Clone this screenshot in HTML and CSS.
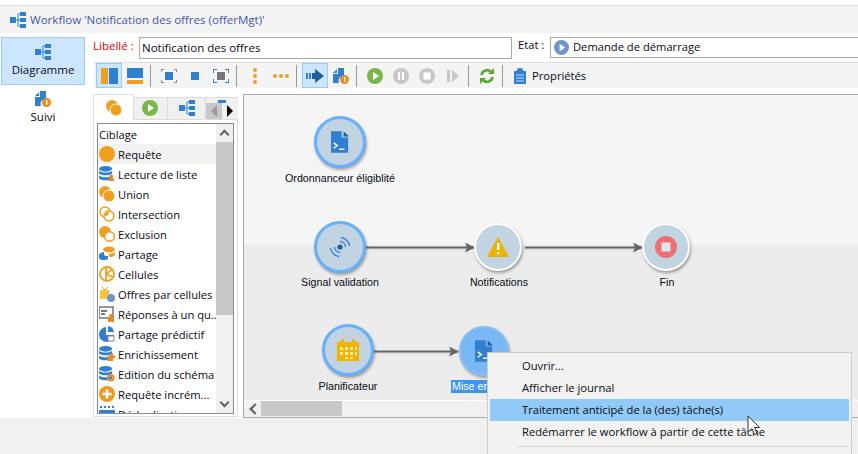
FILE: index.html
```html
<!DOCTYPE html>
<html lang="fr">
<head>
  <meta charset="UTF-8">
  <title>Workflow</title>
  <link rel="stylesheet" href="styles.css">
</head>
<body>

  <svg class="defs" width="0" height="0">
    <symbol id="i-wf" viewBox="0 0 16 16">
      <rect x="0" y="5" width="6" height="6" fill="#2f80d0"/>
      <rect x="10" y="0" width="6" height="4" fill="#2f80d0"/>
      <rect x="10" y="6" width="6" height="4" fill="#2f80d0"/>
      <rect x="10" y="12" width="6" height="4" fill="#2f80d0"/>
      <path d="M6 8h2M8 2v12M8 2h2M8 8h2M8 14h2" stroke="#2f80d0" fill="none"/>
    </symbol>
    <symbol id="i-doc" viewBox="0 0 20 24">
      <path d="M0 0h12v7h7v17h-19z" fill="#2f80d0"/>
      <path d="M14 0l6 6h-6z" fill="#1e5f9e"/>
      <path d="M3 13l4 3-4 3M9 20h6" stroke="#fff" stroke-width="1.5" fill="none"/>
    </symbol>
    <symbol id="i-suivi" viewBox="0 0 16 16">
      <path d="M0 5l4-4v4zM5 0h6v8a5 5 0 0 0-5 7h-6v-9h5z" fill="#2f80d0"/>
      <circle cx="11.5" cy="11.5" r="4.5" fill="#ee8a1d"/>
      <rect x="11" y="9" width="1.4" height="5" fill="#fff"/>
    </symbol>
    <symbol id="i-db" viewBox="0 0 17 17">
      <ellipse cx="7" cy="3" rx="7" ry="3" fill="#2f80d0"/>
      <path d="M0 5c2 2.500 12 2.500 14 0v3c-2 2.500-12 2.500-14 0zM0 10c2 2.500 12 2.500 14 0v3c-2 3-12 3-14 0z" fill="#2f80d0"/>
    </symbol>
  </svg>

  <div class="top-gap"></div>
  <div class="title-bar">
    <svg class="title-icon"><use href="#i-wf"/></svg>
    <span>Workflow 'Notification des offres (offerMgt)'</span>
  </div>

  <div class="main">
    <div class="sidebar">
      <div class="side-btn active">
        <svg class="side-icon"><use href="#i-wf"/></svg>
        <span>Diagramme</span>
      </div>
      <div class="side-btn">
        <svg class="side-icon"><use href="#i-suivi"/></svg>
        <span>Suivi</span>
      </div>
    </div>

    <div class="content">
      <div class="form-row">
        <label class="lbl-required">Libellé :</label>
        <div class="field field-name">Notification des offres</div>
        <label class="lbl-state">Etat :</label>
        <div class="field field-state">
          <svg width="15" height="15" viewBox="0 0 16 16"><circle cx="8" cy="8" r="8" fill="#6f94c6"/><path d="M6 4l6 4-6 4z" fill="#fff"/></svg>
          Demande de démarrage
        </div>
      </div>

      <div class="toolbar">
        <div class="tool on"><svg width="17" height="16" viewBox="0 0 17 16"><rect width="7" height="16" fill="#f0a020"/><rect x="8" width="9" height="16" fill="#2f80d0"/></svg></div>
        <div class="tool"><svg width="16" height="16" viewBox="0 0 16 16"><rect width="16" height="10" fill="#2f80d0"/><rect y="12" width="16" height="4" fill="#f0a020"/></svg></div>
        <div class="sep"></div>
        <div class="tool"><svg width="16" height="14" viewBox="0 0 16 14"><rect x="4" y="3" width="8" height="8" fill="#2f80d0"/><path d="M0 0h3v1h-2v2h-1zM16 0h-3v1h2v2h1zM0 14h3v-1h-2v-2h-1zM16 14h-3v-1h2v-2h1z" fill="#888"/></svg></div>
        <div class="tool"><svg width="8" height="8"><rect width="8" height="8" fill="#2f80d0"/></svg></div>
        <div class="tool"><svg width="16" height="14" viewBox="0 0 16 14"><rect x="4" y="3" width="8" height="8" fill="#777"/><path d="M0 0h4v1h-3v3h-1zM16 0h-4v1h3v3h1zM0 14h4v-1h-3v-3h-1zM16 14h-4v-1h3v-3h1z" fill="#2f80d0"/></svg></div>
        <div class="sep"></div>
        <div class="tool"><svg width="6" height="16" viewBox="0 0 6 16"><circle cx="3" cy="2" r="2" fill="#f0a020"/><circle cx="3" cy="8" r="2" fill="#f0a020"/><circle cx="3" cy="14" r="2" fill="#f0a020"/></svg></div>
        <div class="tool"><svg width="16" height="6" viewBox="0 0 16 6"><circle cx="2" cy="3" r="2" fill="#f0a020"/><circle cx="8" cy="3" r="2" fill="#f0a020"/><circle cx="14" cy="3" r="2" fill="#f0a020"/></svg></div>
        <div class="sep"></div>
        <div class="tool on"><svg width="18" height="14" viewBox="0 0 18 14"><rect y="4" width="2" height="6" fill="#2f80d0"/><rect x="3" y="4" width="2" height="6" fill="#2f80d0"/><path d="M6 4h3v-4l9 7-9 7v-4h-3z" fill="#1e5f9e"/></svg></div>
        <div class="tool"><svg width="16" height="16"><use href="#i-suivi"/></svg></div>
        <div class="sep"></div>
        <div class="tool"><svg width="16" height="16" viewBox="0 0 16 16"><circle cx="8" cy="8" r="8" fill="#7ab648"/><path d="M6 4l6 4-6 4z" fill="#fff"/></svg></div>
        <div class="tool"><svg width="16" height="16" viewBox="0 0 16 16"><circle cx="8" cy="8" r="8" fill="#c8c8c8"/><rect x="5" y="4" width="2" height="8" fill="#fff"/><rect x="9" y="4" width="2" height="8" fill="#fff"/></svg></div>
        <div class="tool"><svg width="16" height="16" viewBox="0 0 16 16"><circle cx="8" cy="8" r="8" fill="#c8c8c8"/><rect x="4.500" y="4.500" width="7" height="7" fill="#fff"/></svg></div>
        <div class="tool"><svg width="12" height="12" viewBox="0 0 12 12"><rect width="3" height="12" fill="#c8c8c8"/><path d="M5 0l7 6-7 6z" fill="#c8c8c8"/></svg></div>
        <div class="sep"></div>
        <div class="tool"><svg width="16" height="16" viewBox="0 0 16 16"><path d="M2.500 7a5.500 5.500 0 0 1 9.500-3M13.500 9a5.500 5.500 0 0 1-9.500 3" stroke="#5aa832" stroke-width="2.600" fill="none"/><path d="M15 0v6h-6zM1 16v-6h6z" fill="#5aa832"/></svg></div>
        <div class="sep"></div>
        <div class="props">
          <svg width="12" height="16" viewBox="0 0 12 16"><path d="M0 3h3v-1a3 2 0 0 1 6 0v1h3v13h-12z" fill="#2f80d0"/><path d="M2 7h8M2 10h8M2 13h8" stroke="#cfe3f6"/></svg>
          <span>Propriétés</span>
        </div>
      </div>

      <div class="work">
        <div class="palette">
          <div class="tabs">
            <div class="tab current"><svg width="16" height="16" viewBox="0 0 16 16"><circle cx="6" cy="6" r="6" fill="#f0a020"/><circle cx="10" cy="10" r="6" fill="#f0a020" stroke="#fff"/></svg></div>
            <div class="tab t2"><svg width="16" height="16" viewBox="0 0 16 16"><circle cx="8" cy="8" r="8" fill="#7ab648"/><path d="M6 4l6 4-6 4z" fill="#fff"/></svg></div>
            <div class="tab t3"><svg width="16" height="16"><use href="#i-wf"/></svg></div>
            <div class="tab-nav">
              <div class="tab-peek"></div>
              <div class="nav-btns">
                <div class="nav-btn prev"></div>
                <div class="nav-btn next"></div>
              </div>
            </div>
          </div>
          <div class="tab-body">
            <div class="list">
              <ul class="items">
                <li class="head">Ciblage</li>
                <li class="hover"><svg viewBox="0 0 16 16"><circle cx="8" cy="8" r="8" fill="#f0a020"/></svg>Requête</li>
                <li><svg viewBox="0 0 17 17"><use href="#i-db"/><circle cx="13" cy="11" r="2" fill="#ee8a1d"/><rect x="10" y="13" width="6" height="3" fill="#ee8a1d"/></svg>Lecture de liste</li>
                <li><svg viewBox="0 0 16 16"><circle cx="6" cy="6" r="6" fill="#f0a020"/><circle cx="10" cy="10" r="6" fill="#f0a020" stroke="#fff"/></svg>Union</li>
                <li><svg viewBox="0 0 16 16"><circle cx="6" cy="6" r="5" fill="none" stroke="#f0a020" stroke-width="1.500"/><circle cx="10" cy="10" r="5" fill="#fff" stroke="#f0a020" stroke-width="1.500"/><path d="M6 10a4 4 0 0 1 4-4 4 4 0 0 1-4 4z" fill="#f0a020"/></svg>Intersection</li>
                <li><svg viewBox="0 0 16 16"><circle cx="6" cy="6" r="6" fill="#f0a020"/><circle cx="10.500" cy="10.500" r="4.800" fill="#fff" stroke="#f0a020" stroke-width="1.500"/></svg>Exclusion</li>
                <li><svg viewBox="0 0 16 16"><ellipse cx="10" cy="3.500" rx="6" ry="3" fill="#f0a020"/><path d="M6 7c3 1 8 1 10-1v3c-1 2-4 2-6 2v-2c0-1-2-2-4-2z" fill="#f0a020"/><path d="M0 9c0-1 2-3 5-3v3c1 1 3 1 4 1v3c-3 2-9 1-9-1z" fill="#2f80d0"/></svg>Partage</li>
                <li><svg viewBox="0 0 16 16"><circle cx="8" cy="8" r="7" fill="none" stroke="#f0a020" stroke-width="1.800"/><path d="M7 1v14M7 8l7-5M7 8l7 3" stroke="#f0a020" stroke-width="1.800" fill="none"/></svg>Cellules</li>
                <li><svg viewBox="0 0 16 16"><rect x="1" y="4" width="9" height="9" fill="#f5c43a"/><path d="M3 1l3 3 3-3" stroke="#f0a020" fill="none"/><circle cx="12" cy="12" r="4" fill="#6f94c6"/></svg>Offres par cellules</li>
                <li><svg viewBox="0 0 16 16"><rect x="0" y="1" width="14" height="11" fill="none" stroke="#777" stroke-width="1.500"/><path d="M2 5h6M2 8h4" stroke="#777" stroke-width="2"/><circle cx="12" cy="10" r="2" fill="#ee8a1d"/><rect x="9" y="12" width="6" height="4" fill="#ee8a1d"/></svg>Réponses à un qu...</li>
                <li><svg viewBox="0 0 16 16"><path d="M7 1v8h8a7.500 7.500 0 1 1-8-8z" fill="#2f80d0"/><path d="M9 0a7 7 0 0 1 6 6h-6z" fill="#2f80d0"/><rect x="9" y="10" width="6" height="5" fill="#fff" stroke="#888"/></svg>Partage prédictif</li>
                <li><svg viewBox="0 0 17 17"><use href="#i-db"/><path d="M9 10h3v-2h3v2h2v3h-2v3h-6z" fill="#ee8a1d"/></svg>Enrichissement</li>
                <li><svg viewBox="0 0 17 17"><use href="#i-db"/><circle cx="12.500" cy="12.500" r="3" fill="none" stroke="#ee8a1d" stroke-width="2.200"/></svg>Edition du schéma</li>
                <li><svg viewBox="0 0 16 16"><circle cx="8" cy="8" r="8" fill="#ee9a20"/><path d="M8 3.500v9M3.500 8h9" stroke="#fff" stroke-width="2.500"/></svg>Requête incrém...</li>
                <li><svg viewBox="0 0 16 16"><rect y="4" width="16" height="12" fill="#2f80d0"/><path d="M1 1h2M5 1h2M9 1h2M13 1h2" stroke="#2f80d0" stroke-width="2"/></svg>Déduplication</li>
              </ul>
              <div class="list-scroll">
                <div class="arrow up"></div>
                <div class="thumb"></div>
                <div class="arrow down"></div>
              </div>
            </div>
          </div>
        </div>

        <div class="canvas">
          <div class="band-top"></div>
          <div class="band-bottom"></div>
          <div class="hscroll"><div class="harrow"></div><div class="hthumb"></div></div>

          <svg class="links" width="615" height="305">
            <defs>
              <marker id="head" markerWidth="10" markerHeight="10" refX="9" refY="5" orient="auto" markerUnits="userSpaceOnUse">
                <path d="M0 0l10 5-10 5 2-5z" fill="#666"/>
              </marker>
            </defs>
            <path class="link-shadow" d="M122 154h108M281 154h117M130 258h84"/>
            <path class="link" d="M122 152.500h108" marker-end="url(#head)"/>
            <path class="link" d="M281 152.500h117" marker-end="url(#head)"/>
            <path class="link" d="M130 256.500h84" marker-end="url(#head)"/>
          </svg>

          <div class="node sel" style="left:70px;top:21px">
            <svg width="18" height="22"><use href="#i-doc"/></svg>
          </div>
          <div class="node-label" style="left:96px;top:77px">Ordonnanceur éligiblité</div>

          <div class="node sel" style="left:70px;top:126px">
            <svg width="24" height="24" viewBox="0 0 24 24"><circle cx="12" cy="12" r="2.600" fill="#1e5f9e"/><g fill="none" stroke="#2f80d0" stroke-width="1.300"><path d="M12 6.500a5.500 5.500 0 0 1 5.500 5.500M12 17.500a5.500 5.500 0 0 1-5.500-5.500M13 2.500a9.500 9.500 0 0 1 8.500 8.500M11 21.500a9.500 9.500 0 0 1-8.500-8.500"/></g></svg>
          </div>
          <div class="node-label" style="left:96px;top:181px">Signal validation</div>

          <div class="node plain" style="left:230px;top:128px">
            <svg width="22" height="20" viewBox="0 0 22 20"><path d="M11 0l11 20h-22z" fill="#edb100"/><rect x="10" y="6" width="2.400" height="7" fill="#fff"/><rect x="10" y="15" width="2.400" height="2.400" fill="#fff"/></svg>
          </div>
          <div class="node-label" style="left:255px;top:181px">Notifications</div>

          <div class="node plain" style="left:398px;top:128px">
            <svg width="22" height="22" viewBox="0 0 22 22"><circle cx="11" cy="11" r="11" fill="#f07070"/><rect x="6.500" y="6.500" width="9" height="9" fill="#dce6f0"/></svg>
          </div>
          <div class="node-label" style="left:423px;top:181px">Fin</div>

          <div class="node sel" style="left:78px;top:229px">
            <svg width="22" height="22" viewBox="0 0 22 22"><path d="M0 3h4v-3h3v3h8v-3h3v3h4v19h-22z" fill="#f0b400"/><path d="M3 8h3v3h-3zM8 8h3v3h-3zM13 8h3v3h-3zM18 8h2v3h-2zM3 13h3v3h-3zM8 13h3v3h-3zM13 13h3v3h-3zM18 13h2v3h-2zM8 18h3v2h-3zM13 18h3v2h-3z" fill="#fde9a8"/></svg>
          </div>
          <div class="node-label" style="left:104px;top:285px">Planificateur</div>

          <div class="node picked" style="left:215px;top:231px">
            <svg width="18" height="22"><use href="#i-doc"/></svg>
          </div>
          <div class="node-label picked-label" style="left:207px;top:285px">Mise en ligne</div>
        </div>
      </div>
    </div>
  </div>

  <div class="footer"></div>

  <div class="menu">
    <div class="menu-item">Ouvrir...</div>
    <div class="menu-item">Afficher le journal</div>
    <div class="menu-item hot">Traitement anticipé de la (des) tâche(s)</div>
    <div class="menu-item">Redémarrer le workflow à partir de cette tâche</div>
    <div class="menu-sep"></div>
  </div>

  <svg class="cursor" width="13" height="21" viewBox="0 0 13 21"><path d="M1 1v16l4-3.500 2.500 6 2.500-1-2.500-6h5z" fill="#fff" stroke="#333"/></svg>

</body>
</html>
```

FILE: styles.css
```css
* {
  box-sizing: border-box;
}
html, body {
  margin: 0;
  height: 454px;
  overflow: hidden;
}
body {
  position: relative;
  background: #fff;
  color: #0a0a14;
  font-family: "Open Sans", sans-serif;
  font-size: 11.2px;
}
.defs {
  position: absolute;
}
.top-gap {
  height: 6px;
  border-bottom: 1px solid #ddd;
}
.title-bar {
  height: 27px;
  background: #f4f4f4;
  display: flex;
  align-items: center;
  padding-left: 10px;
  gap: 4px;
  color: #3f55b5;
  font-size: 11.55px;
}
.title-icon {
  width: 16px;
  height: 16px;
}
.main {
  display: flex;
  height: 385px;
}
.sidebar {
  width: 90px;
  flex: none;
  padding: 4px 5px 0 1px;
}
.side-btn {
  height: 48px;
  display: flex;
  flex-direction: column;
  align-items: center;
  gap: 2px;
  padding-top: 6px;
  font-size: 11.5px;
}
.side-btn.active {
  background: #cce6ff;
  border: 1px solid #99ccf5;
}
.side-icon {
  width: 16px;
  height: 16px;
  flex: none;
}
.content {
  flex: 1;
  min-width: 0;
  display: flex;
  flex-direction: column;
}
.form-row {
  display: flex;
  align-items: flex-start;
  height: 29px;
  padding-top: 4px;
  padding-left: 3px;
  flex: none;
}
.lbl-required {
  color: #e00000;
  width: 46px;
  flex: none;
  line-height: 17px;
  font-size: 11.5px;
}
.lbl-state {
  width: 32px;
  flex: none;
  margin-left: 6px;
  line-height: 15px;
}
.field {
  height: 22px;
  flex: none;
  border: 1px solid #aaa;
  background: #fff;
  display: flex;
  align-items: center;
  padding: 0 0 2px 2px;
}
.field-name {
  width: 373px;
  font-size: 11.5px;
}
.field-state {
  width: 320px;
  height: 21px;
  gap: 4px;
  padding-left: 3px;
}
.field-state svg {
  margin-top: 2px;
}
.toolbar {
  margin-left: 4px;
  height: 26px;
  flex: none;
  border-top: 1px solid #ddd;
  background: #f4f4f4;
  display: flex;
  align-items: center;
  padding-left: 2px;
}
.tool {
  width: 26px;
  height: 25px;
  display: flex;
  align-items: center;
  justify-content: center;
}
.tool.on {
  background: #cce6ff;
  border: 1px solid #99ccf5;
}
.sep {
  width: 1px;
  height: 22px;
  background: #999;
  margin: 0 5px 0 2px;
}
.props {
  display: flex;
  align-items: center;
  gap: 6px;
  margin-left: 6px;
}
.work {
  flex: 1;
  display: flex;
  padding-top: 6px;
  min-height: 0;
}
.palette {
  width: 145px;
  flex: none;
  margin-left: 3px;
  display: flex;
  flex-direction: column;
  padding-bottom: 1px;
}
.tabs {
  height: 26px;
  flex: none;
  display: flex;
  border-bottom: 1px solid #ddd;
}
.tab {
  display: flex;
  align-items: center;
  justify-content: center;
  background: #f0f0f0;
  border: 1px solid #ddd;
  border-left: 0;
  border-bottom: 0;
  width: 34px;
  margin-top: 3px;
  padding-bottom: 2px;
}
.tab.current {
  width: 41px;
  height: 26px;
  margin-top: 0;
  padding-bottom: 0;
  background: #fff;
  border-left: 1px solid #ddd;
}
.tab.t2 {
  padding-right: 2px;
}
.tab.t3 {
  width: 38px;
  padding-left: 1px;
}
.tab-nav {
  flex: 1;
  margin-top: 3px;
  background: #f0f0f0;
  border-top: 1px solid #ddd;
  display: flex;
  flex-direction: column;
}
.tab-peek {
  width: 8px;
  height: 3px;
  margin: 2px 0 0 12px;
  background: #2f80d0;
  flex: none;
}
.nav-btns {
  display: flex;
  flex: 1;
}
.nav-btn {
  width: 16px;
  height: 16px;
  display: flex;
  align-items: center;
  justify-content: center;
}
.nav-btn.prev {
  background: #c8c8c8;
}
.nav-btn.prev::before {
  content: "";
  border: 6px solid transparent;
  border-left: 0;
  border-right: 6px solid #9a9a9a;
}
.nav-btn.next::before {
  content: "";
  border: 6px solid transparent;
  border-right: 0;
  border-left: 6px solid #000;
}
.tab-body {
  flex: 1;
  border: 1px solid #ddd;
  border-top: 0;
  padding: 3px 3px 2px 3px;
  min-height: 0;
}
.list {
  height: 100%;
  border: 1px solid #8a8a94;
  display: flex;
  overflow: hidden;
}
.items {
  list-style: none;
  margin: 0;
  padding: 0;
  flex: 1;
  min-width: 0;
}
.items li {
  height: 20px;
  display: flex;
  align-items: center;
  gap: 3px;
  padding-left: 1px;
  white-space: nowrap;
}
.items li svg {
  width: 16px;
  height: 16px;
  flex: none;
}
.items .hover {
  background: #f2f2f2;
}
.list-scroll {
  width: 17px;
  flex: none;
  background: #f0f0f0;
  display: flex;
  flex-direction: column;
  align-items: center;
}
.arrow {
  width: 7px;
  height: 7px;
  border-left: 2px solid #606060;
  border-top: 2px solid #606060;
  flex: none;
}
.arrow.up {
  transform: rotate(45deg);
  margin: 7px 0 4px;
}
.arrow.down {
  transform: rotate(225deg);
  margin-top: auto;
  margin-bottom: 7px;
}
.thumb {
  width: 100%;
  height: 173px;
  flex: none;
  background: #c8c8c8;
}
.canvas {
  position: relative;
  width: 615px;
  flex: none;
  margin-left: 5px;
  border-top: 1px solid #aaa;
  border-left: 1px solid #aaa;
  border-bottom: 1px solid #aaa;
  display: flex;
  flex-direction: column;
  overflow: hidden;
}
.band-top {
  height: 150px;
  background: #f5f5f5;
}
.band-bottom {
  flex: 1;
  background: #ececec;
}
.hscroll {
  height: 17px;
  flex: none;
  background: #f0f0f0;
  border-top: 1px solid #fff;
  padding-bottom: 1px;
  display: flex;
  align-items: stretch;
}
.harrow {
  width: 17px;
  position: relative;
}
.harrow::before {
  content: "";
  position: absolute;
  left: 7px;
  top: 4px;
  width: 6px;
  height: 6px;
  border-left: 2px solid #606060;
  border-bottom: 2px solid #606060;
  transform: rotate(45deg);
}
.hthumb {
  width: 81px;
  background: #c8c8c8;
}
.links {
  position: absolute;
  left: 0;
  top: 0;
}
.link {
  stroke: #666;
  stroke-width: 2;
  fill: none;
}
.link-shadow {
  stroke: #ccc;
  stroke-width: 1;
  fill: none;
}
.node {
  position: absolute;
  width: 52px;
  height: 52px;
  border-radius: 50%;
  background: #c2d4e2;
  display: flex;
  align-items: center;
  justify-content: center;
  box-shadow: 1px 2px 3px rgba(0, 0, 0, 0.35);
}
.node.sel {
  border: 3px solid #66b1fb;
}
.node.plain {
  width: 48px;
  height: 48px;
  border: 2px solid #fff;
}
.node.picked {
  width: 50px;
  height: 50px;
  background: #7ab8f5;
  border: 2px solid #85bdf5;
}
.node-label {
  position: absolute;
  transform: translateX(-50%);
  font-family: "Liberation Sans", Arial, sans-serif;
  font-size: 10.7px;
  line-height: 13px;
  white-space: nowrap;
}
.picked-label {
  background: #3d95f0;
  color: #fff;
  transform: none;
  padding: 0 1px;
}
.footer {
  height: 36px;
  background: #f0f0f0;
}
.menu {
  position: absolute;
  left: 487px;
  top: 352px;
  width: 365px;
  height: 110px;
  background: #f2f2f2;
  border: 1px solid #ccc;
  padding: 2px;
}
.menu-item {
  height: 22px;
  line-height: 22px;
  padding-left: 32px;
}
.menu-item.hot {
  background: #91c9f7;
}
.menu-sep {
  height: 1px;
  margin: 3px 0 0 28px;
  background: #d4d4d4;
}
.cursor {
  position: absolute;
  left: 747px;
  top: 415px;
}
```
